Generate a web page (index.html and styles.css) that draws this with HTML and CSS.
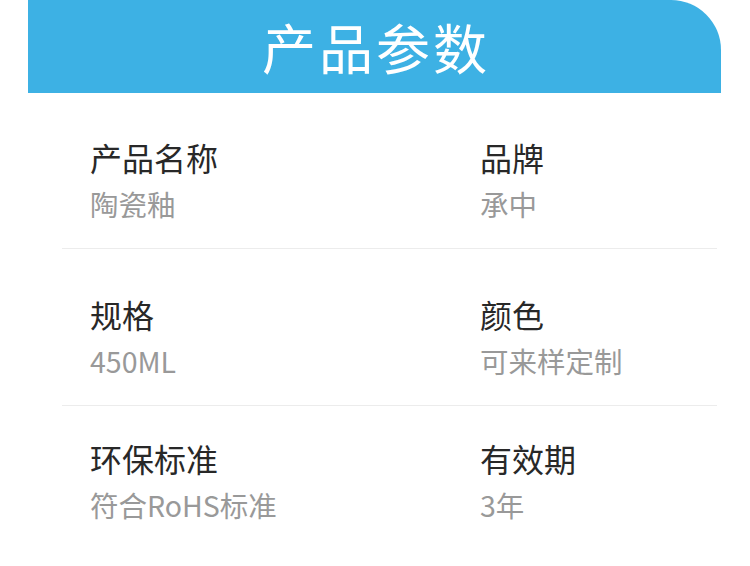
FILE: index.html
```html
<!DOCTYPE html>
<html lang="zh">
<head>
<meta charset="utf-8">
<title>产品参数</title>
<link rel="stylesheet" href="styles.css">
</head>
<body>
<div class="page">
  <div class="header"><h1 class="title">产品参数</h1></div>
  <div class="params">
    <div class="row">
      <div class="item"><div class="label">产品名称</div><div class="value">陶瓷釉</div></div>
      <div class="item"><div class="label">品牌</div><div class="value">承中</div></div>
    </div>
    <div class="row">
      <div class="item"><div class="label">规格</div><div class="value">450ML</div></div>
      <div class="item"><div class="label">颜色</div><div class="value">可来样定制</div></div>
    </div>
    <div class="row last">
      <div class="item"><div class="label">环保标准</div><div class="value">符合RoHS标准</div></div>
      <div class="item"><div class="label">有效期</div><div class="value">3年</div></div>
    </div>
  </div>
</div>
</body>
</html>
```
FILE: styles.css
```css
html, body {
  margin: 0;
  padding: 0;
  background: #fff;
}
body {
  font-family: "Noto Sans CJK SC", "Noto Sans", sans-serif;
  width: 750px;
  height: 566px;
  overflow: hidden;
}
.page {
  width: 750px;
}
.header {
  margin-left: 28px;
  width: 693px;
  height: 93px;
  background: #3db1e4;
  border-top-right-radius: 50px;
  display: flex;
  align-items: center;
  justify-content: center;
}
.title {
  margin: 0;
  color: #fff;
  font-size: 54px;
  font-weight: 400;
  letter-spacing: 3px;
  line-height: 1;
  padding-left: 3px;
}
.params {
  margin-left: 62px;
  width: 655px;
}
.row {
  display: grid;
  grid-template-columns: 390px 1fr;
  padding: 46px 28px 26px;
  border-bottom: 1px solid #ececec;
}
.row + .row {
  padding-top: 47px;
}
.row.last {
  padding-top: 34px;
  border-bottom: none;
}
.item {
  display: flex;
  flex-direction: column;
  gap: 11px;
}
.label {
  font-size: 32px;
  line-height: 36px;
  color: #282828;
}
.value {
  font-size: 28.5px;
  line-height: 36px;
  color: #999;
}
```
